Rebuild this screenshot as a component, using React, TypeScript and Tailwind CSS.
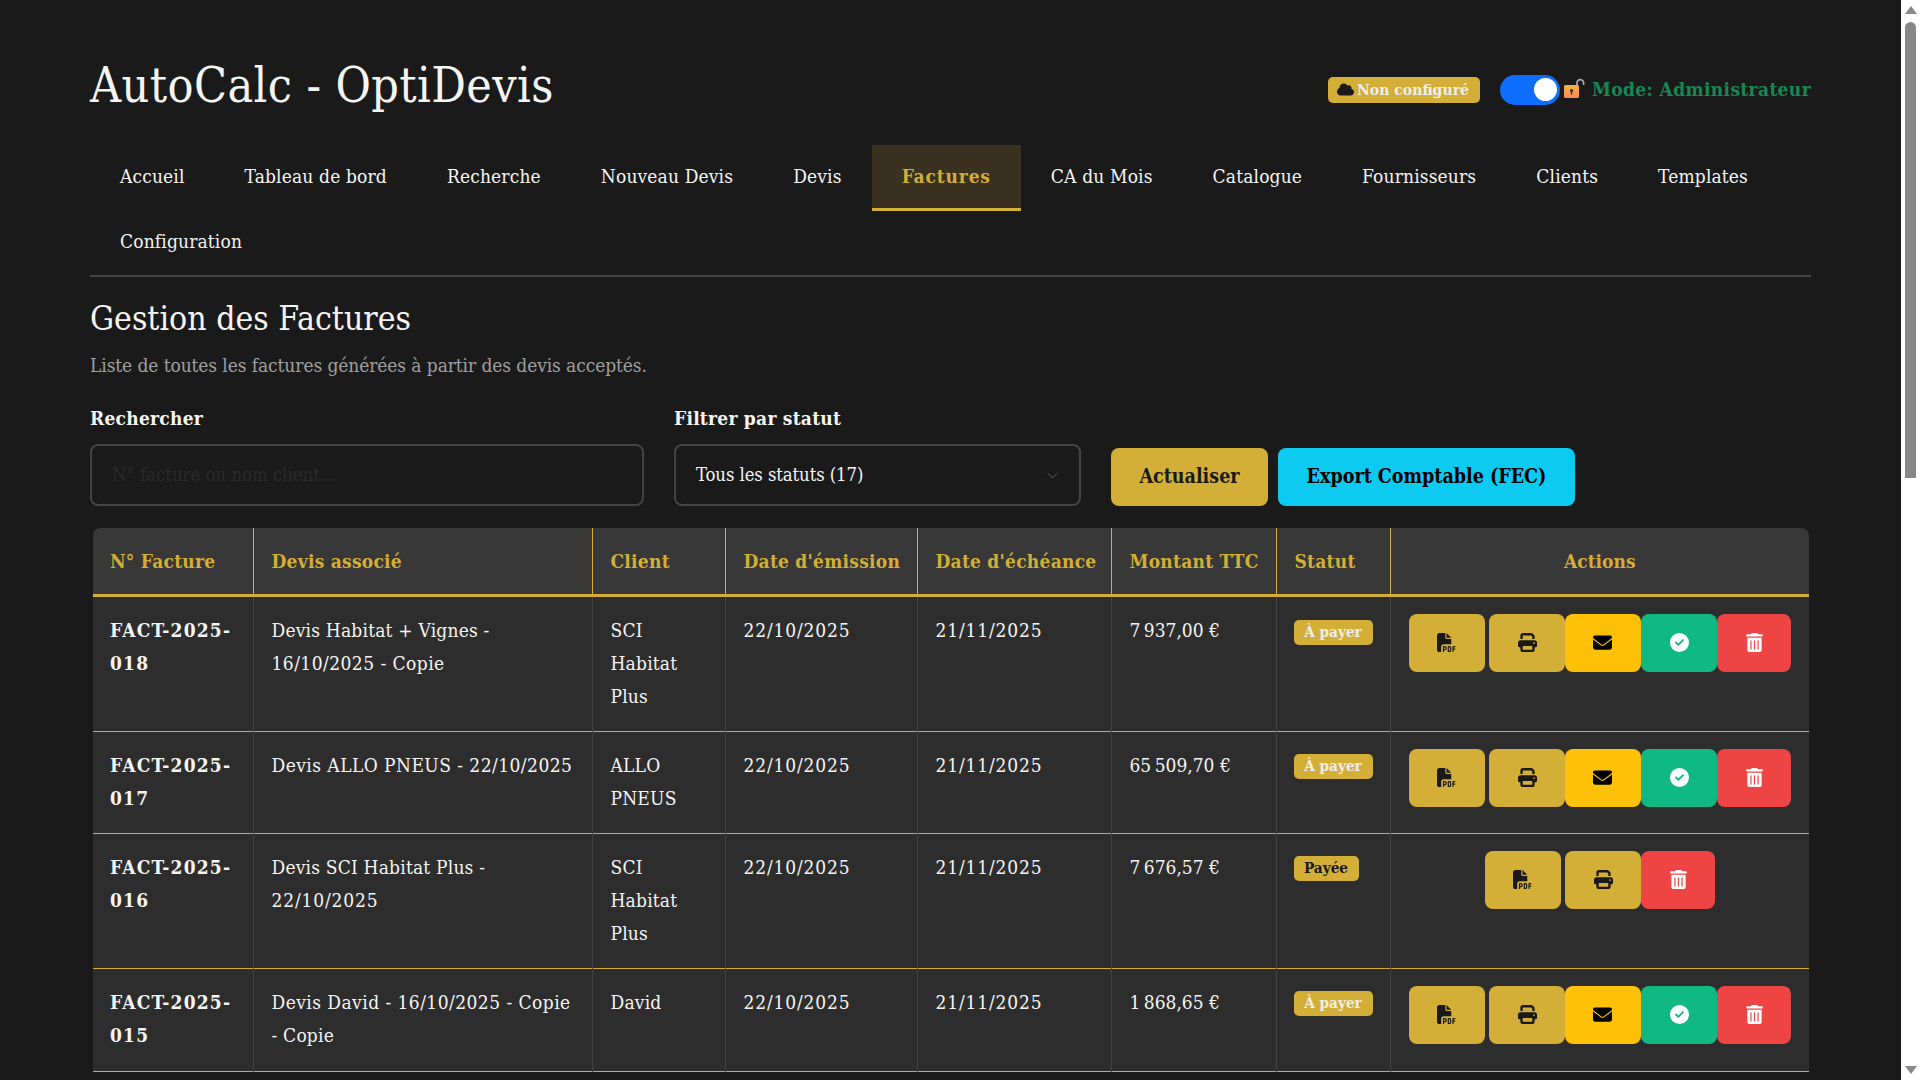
import React from "react";
import { FaFilePdf, FaPrint, FaEnvelope, FaCircleCheck, FaTrashCan, FaCloud } from "react-icons/fa6";
import { BsChevronDown } from "react-icons/bs";

const nav = ["Accueil", "Tableau de bord", "Recherche", "Nouveau Devis", "Devis", "Factures", "CA du Mois", "Catalogue", "Fournisseurs", "Clients", "Templates", "Configuration"];
const T = "tracking-[0.2px]";
const D = "tracking-[0.45px]";
const N = "tracking-[0.85px]";
const rows = [
  { id: ["FACT-2025-", "018"], devis: [["Devis Habitat + Vignes -", T], ["16/10/2025 - Copie", D]], client: ["SCI", "Habitat", "Plus"], m: "7\u202f937,00 €", s: "À payer", h: 136 },
  { id: ["FACT-2025-", "017"], devis: [["Devis ALLO PNEUS - 22/10/2025", D]], client: ["ALLO", "PNEUS"], m: "65\u202f509,70 €", s: "À payer", h: 102 },
  { id: ["FACT-2025-", "016"], devis: [["Devis SCI Habitat Plus -", T], ["22/10/2025", N]], client: ["SCI", "Habitat", "Plus"], m: "7\u202f676,57 €", s: "Payée", h: 135 },
  { id: ["FACT-2025-", "015"], devis: [["Devis David - 16/10/2025 - Copie", D], ["- Copie", T]], client: ["David"], m: "1\u202f868,65 €", s: "À payer", h: 103 },
];

function Btn({ cls, w = "w-[76px]", children }: { cls: string; w?: string; children: React.ReactNode }) {
  return <button className={`${w} h-[58px] rounded-lg flex items-center justify-center text-[19px] ${cls}`}>{children}</button>;
}

export default function App() {
  return (
    <div className="flex h-screen overflow-hidden bg-[#1a1a1a] text-[#f5f5f5] [font-family:'DejaVu_Serif_Condensed','DejaVu_Serif',serif]">
      <main className="flex-1 min-w-0 px-[90px] pt-[48px]">
        <header className="flex items-center justify-between h-[76px] mb-[21px]">
          <h1 className="text-[48px] leading-none tracking-[0.4px] -mt-[2px]">AutoCalc - OptiDevis</h1>
          <div className="flex items-center pt-[7px]">
            <span className="flex items-center gap-[3px] h-[26px] w-[152px] pl-[9px] rounded-[5px] bg-[#d4af37] text-[15.6px] font-bold text-[#eee]">
              <FaCloud className="text-[#1a1a1a] text-[17px]" />Non configuré
            </span>
            <span className="ml-[20px] flex items-center justify-end w-[60px] h-[30px] rounded-full bg-[#0d6efd] pr-[3px]"><span className="w-[23px] h-[23px] rounded-full bg-white"></span></span>
            <svg width="21" height="20" viewBox="0 0 21 20" className="ml-[4px] -mt-[3px]">
              <defs><linearGradient id="lk" x1="0" y1="0" x2="0" y2="1"><stop offset="0" stopColor="#f7b23c" /><stop offset="1" stopColor="#f58a5c" /></linearGradient></defs>
              <path d="M13 8V5a3.3 3.3 0 0 1 6.6 0v2" fill="none" stroke="#a8a8b0" strokeWidth="1.7" />
              <rect x="0" y="7" width="15" height="13" rx="1.5" fill="url(#lk)" />
              <circle cx="7.5" cy="12.5" r="1.6" fill="#40302a" /><rect x="6.8" y="12.5" width="1.4" height="4" fill="#40302a" />
            </svg>
            <span className="ml-[7px] text-[#198754] text-[19px] font-bold tracking-[0.35px]">Mode: Administrateur</span>
          </div>
        </header>

        <nav className="flex flex-wrap border-b-2 border-[#444]">
          {nav.map((n) => (
            <a key={n} className={`${n === "Configuration" ? "h-[64px]" : "h-[66px]"} px-[30px] flex items-center text-[19px] border-b-[3px] ${n === "Factures" ? "bg-[#3a3120] border-[#d4af37] text-[#d4af37] font-bold tracking-[0.85px]" : "border-transparent text-[#f5f5f5] tracking-[0.15px]"}`}>{n}</a>
          ))}
        </nav>

        <h2 className="mt-[21px] text-[33.5px] leading-[42px]">Gestion des Factures</h2>
        <p className="mt-[11px] text-[19px] leading-[28px] text-[#a0a0a0] tracking-[-0.09px]">Liste de toutes les factures générées à partir des devis acceptés.</p>

        <div className="flex items-end mt-[25px]">
          <div className="w-[554px] mr-[30px]">
            <label className="block font-bold text-[19px] tracking-[0.25px] leading-[28px] mb-[12px]">Rechercher</label>
            <div className="h-[62px] rounded-lg border-2 border-[#444] flex items-center px-[20px] text-[18.4px] text-[#2a2a2a]">N° facture ou nom client...</div>
          </div>
          <div className="w-[407px] mr-[30px]">
            <label className="block font-bold text-[19px] tracking-[0.25px] leading-[28px] mb-[12px]">Filtrer par statut</label>
            <div className="h-[62px] rounded-lg border-2 border-[#444] flex items-center justify-between pl-[20px] pr-[20px] text-[18.4px] tracking-[-0.1px]">Tous les statuts (17)<BsChevronDown className="text-[#555] text-[13px]" /></div>
          </div>
          <button className="w-[157px] h-[58px] rounded-lg bg-[#d4af37] text-[#1a1a1a] font-bold text-[19.5px] mr-[10px]">Actualiser</button>
          <button className="w-[297px] h-[58px] rounded-lg bg-[#0dcaf0] text-black font-bold text-[19.5px]">Export Comptable (FEC)</button>
        </div>

        <div className="mt-[22px] ml-[3px] w-[1716px] rounded-t-lg overflow-hidden">
          <table className="w-full table-fixed border-collapse text-[19px]">
            <colgroup>
              <col className="w-[160px]" /><col className="w-[339px]" /><col className="w-[133px]" /><col className="w-[192px]" /><col className="w-[194px]" /><col className="w-[165px]" /><col className="w-[114px]" /><col />
            </colgroup>
            <thead>
              <tr className="h-[67px] bg-[#383838] text-[#d4af37] font-bold border-b-[3px] border-[#d4af37]">
                {["N° Facture", "Devis associé", "Client", "Date d'émission", "Date d'échéance", "Montant TTC", "Statut"].map((h, i) => (
                  <th key={h} className={`text-left font-bold ${i === 0 ? "pl-[17px]" : "pl-[18px]"} border-r border-[#d4af37] whitespace-nowrap tracking-[0.25px]`}>{h}</th>
                ))}
                <th className="text-center font-bold">Actions</th>
              </tr>
            </thead>
            <tbody>
              {rows.map((r, i) => (
                <tr key={i} className="bg-[#2d2d2d] border-b border-[#d4af37] align-top" style={{ height: r.h }}>
                  <td className="pl-[17px] py-[17px] border-r border-[#444] font-bold leading-[33px] tracking-[1.2px]">{r.id.map((l) => <div key={l}>{l}</div>)}</td>
                  <td className="pl-[18px] py-[17px] border-r border-[#444] leading-[33px]">{r.devis.map((l) => <div key={l[0]} className={`whitespace-nowrap ${l[1]}`}>{l[0]}</div>)}</td>
                  <td className="pl-[18px] py-[17px] border-r border-[#444] leading-[33px] tracking-[0.2px]">{r.client.map((l) => <div key={l}>{l}</div>)}</td>
                  <td className="pl-[18px] py-[17px] border-r border-[#444] leading-[33px] tracking-[0.85px]">22/10/2025</td>
                  <td className="pl-[18px] py-[17px] border-r border-[#444] leading-[33px] tracking-[0.85px]">21/11/2025</td>
                  <td className="pl-[18px] py-[17px] border-r border-[#444] leading-[33px] tracking-[0.5px]">{r.m}</td>
                  <td className={`pl-[17px] ${i === 0 ? "py-[23px]" : "py-[22px]"} border-r border-[#444] leading-none`}>
                    <span className={`inline-flex items-center justify-center h-[25px] pt-[2px] rounded-[5px] bg-[#d4af37] text-[15.2px] font-bold ${r.s === "Payée" ? "w-[65px] text-[#1a1a1a]" : "w-[79px] text-[#eee]"}`}>{r.s}</span>
                  </td>
                  <td className="py-[17px]">
                    <div className="flex justify-center">
                      <div className="flex">
                        <Btn cls="bg-[#d4af37] text-[#1a1a1a] mr-[4px]"><FaFilePdf /></Btn>
                        <Btn cls="bg-[#d4af37] text-[#1a1a1a] pl-[2px]"><FaPrint /></Btn>
                        {r.s !== "Payée" && <Btn cls="bg-[#ffc107] text-black"><FaEnvelope /></Btn>}
                        {r.s !== "Payée" && <Btn cls="bg-[#10b981] text-white pl-[2px]"><FaCircleCheck /></Btn>}
                        <Btn w="w-[74px]" cls="bg-[#ef4444] text-white pl-[2px]"><FaTrashCan /></Btn>
                      </div>
                    </div>
                  </td>
                </tr>
              ))}
            </tbody>
          </table>
        </div>
      </main>
      <aside className="w-[19px] shrink-0 bg-white flex flex-col items-center">
        <div className="mt-[6px] w-0 h-0 border-x-[6px] border-x-transparent border-b-[8px] border-b-[#888]"></div>
        <div className="mt-[8px] w-[11px] h-[456px] rounded-t-full bg-[#888]"></div>
        <div className="mt-auto mb-[6px] w-0 h-0 border-x-[6px] border-x-transparent border-t-[8px] border-t-[#888]"></div>
      </aside>
    </div>
  );
}
